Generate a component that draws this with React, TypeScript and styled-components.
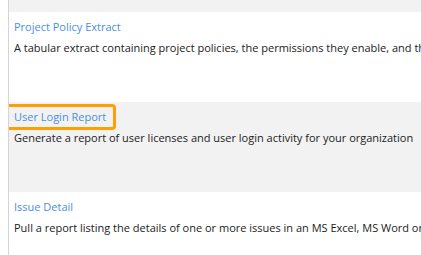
import React from "react";
import styled, { createGlobalStyle } from "styled-components";

const Global = createGlobalStyle`
  html, body { margin: 0; padding: 0; background: #ffffff; }
  body { padding-left: 8px; font-family: "Open Sans", "Liberation Sans", sans-serif; overflow: hidden; }
`;

const List = styled.div`
  border-left: 1px solid #d4d4d4;
  height: 255px;
  display: flex;
  flex-direction: column;
  overflow: hidden;
`;

const Stub = styled.div`
  height: 12px;
  background: #f2f2f2;
  flex: none;
`;

const Row = styled.div<{ $shaded?: boolean }>`
  height: 90px;
  flex: none;
  box-sizing: border-box;
  padding: 7px 0 0 5px;
  background: ${(p) => (p.$shaded ? "#f2f2f2" : "#ffffff")};
  display: flex;
  flex-direction: column;
  gap: 6px;
`;

const Title = styled.a<{ $highlight?: boolean }>`
  position: relative;
  align-self: flex-start;
  font-size: 11px;
  line-height: 15px;
  color: #4a8fe0;
  text-decoration: none;
  cursor: pointer;
  ${(p) =>
    p.$highlight
      ? `
    &::after {
      content: "";
      position: absolute;
      left: -10px;
      right: -10px;
      top: -5px;
      bottom: -6px;
      border: 3px solid #ff9f00;
      border-radius: 4px;
    }
  `
      : ""}
`;

const Desc = styled.div`
  font-size: 11px;
  line-height: 15px;
  color: #222222;
  white-space: nowrap;
  overflow: hidden;
`;

const items = [
  {
    title: "Project Policy Extract",
    desc: "A tabular extract containing project policies, the permissions they enable, and the users and groups assigned to them",
  },
  {
    title: "User Login Report",
    desc: "Generate a report of user licenses and user login activity for your organization",
    shaded: true,
    highlight: true,
  },
  {
    title: "Issue Detail",
    desc: "Pull a report listing the details of one or more issues in an MS Excel, MS Word or PDF document",
  },
];

export default function App() {
  return (
    <>
      <Global />
      <List>
        <Stub />
        {items.map((it) => (
          <Row key={it.title} $shaded={it.shaded}>
            <Title $highlight={it.highlight}>{it.title}</Title>
            <Desc>{it.desc}</Desc>
          </Row>
        ))}
      </List>
    </>
  );
}
